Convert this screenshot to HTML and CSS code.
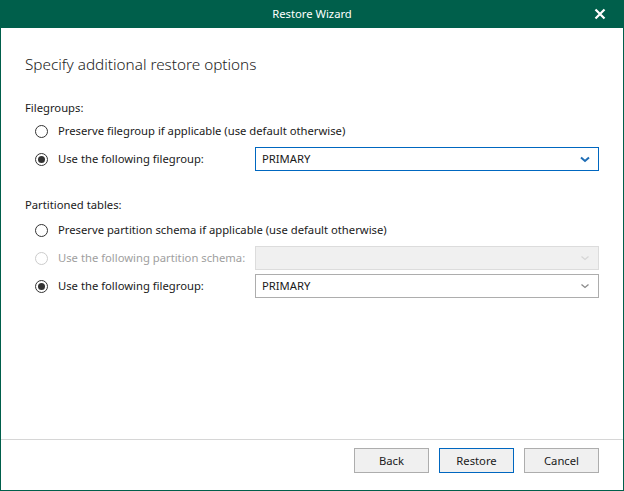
FILE: index.html
```html
<!DOCTYPE html>
<html>
<head>
<meta charset="utf-8">
<link rel="stylesheet" href="styles.css">
</head>
<body>
<div class="window">
  <div class="titlebar">
    <span class="title">Restore Wizard</span>
    <svg class="close" width="12" height="12" viewBox="0 0 12 12"><path d="M1.5 1.5 L10.5 10.5 M10.5 1.5 L1.5 10.5" stroke="#fff" stroke-width="2.2" fill="none"/></svg>
  </div>
  <div class="content">
    <h1 class="heading">Specify additional restore options</h1>

    <div class="group-label">Filegroups:</div>
    <div class="row first">
      <span class="radio"></span>
      <span class="label">Preserve filegroup if applicable (use default otherwise)</span>
    </div>
    <div class="row">
      <span class="radio checked"></span>
      <span class="label fixed">Use the following filegroup:</span>
      <div class="select focused">
        <span class="value">PRIMARY</span>
        <svg class="chev" width="10" height="7" viewBox="0 0 10 7"><path d="M1 1.5 L5 5 L9 1.5" stroke="#1e6db5" stroke-width="2" fill="none"/></svg>
      </div>
    </div>

    <div class="group-label second">Partitioned tables:</div>
    <div class="row first2">
      <span class="radio"></span>
      <span class="label">Preserve partition schema if applicable (use default otherwise)</span>
    </div>
    <div class="row">
      <span class="radio disabled"></span>
      <span class="label fixed disabled">Use the following partition schema:</span>
      <div class="select disabled">
        <span class="value"></span>
        <svg class="chev" width="10" height="7" viewBox="0 0 10 7"><path d="M1.5 1.5 L5 4.5 L8.5 1.5" stroke="#d6d6d6" stroke-width="1.3" fill="none"/></svg>
      </div>
    </div>
    <div class="row">
      <span class="radio checked"></span>
      <span class="label fixed">Use the following filegroup:</span>
      <div class="select">
        <span class="value">PRIMARY</span>
        <svg class="chev" width="10" height="7" viewBox="0 0 10 7"><path d="M1.5 1.5 L5 4.5 L8.5 1.5" stroke="#8a8a8a" stroke-width="1.3" fill="none"/></svg>
      </div>
    </div>
  </div>
  <div class="footer">
    <button class="btn">Back</button>
    <button class="btn default">Restore</button>
    <button class="btn">Cancel</button>
  </div>
</div>
</body>
</html>
```

FILE: styles.css
```css
html, body {
  margin: 0;
  padding: 0;
  background: #ffffff;
}
body {
  font-family: "Noto Sans", "Open Sans", sans-serif;
  font-size: 11.25px;
  color: #1a1a1a;
}
.window {
  width: 624px;
  height: 491px;
  box-sizing: border-box;
  border: 1px solid #005f4b;
  border-top: none;
  display: flex;
  flex-direction: column;
  background: #fff;
}
.titlebar {
  height: 28px;
  margin: 0 -1px;
  background: #005f4b;
  color: #fff;
  display: flex;
  align-items: center;
  justify-content: center;
  position: relative;
  flex: none;
}
.title {
  font-size: 11.25px;
  line-height: 16px;
}
.close {
  position: absolute;
  right: 18px;
  top: 8px;
}
.content {
  flex: 1;
  padding: 26px 24px 0 24px;
}
.heading {
  margin: 0;
  font-size: 15.3px;
  font-weight: 300;
  line-height: 20px;
  color: #222;
}
.group-label {
  margin-top: 26px;
  line-height: 16px;
  height: 16px;
}
.group-label.second {
  margin-top: 24px;
}
.row {
  display: flex;
  align-items: center;
  height: 28px;
  padding-left: 10px;
}
.row.first {
  margin-top: 1px;
}
.row.first2 {
  margin-top: 3px;
}
.radio {
  width: 13px;
  height: 13px;
  box-sizing: border-box;
  border: 1px solid #333;
  border-radius: 50%;
  margin-right: 10px;
  flex: none;
  display: flex;
  align-items: center;
  justify-content: center;
  background: #fff;
}
.radio.checked::after {
  content: "";
  width: 7px;
  height: 7px;
  border-radius: 50%;
  background: #333;
}
.radio.disabled {
  border-color: #cccccc;
}
.label {
  line-height: 16px;
  white-space: nowrap;
}
.label.fixed {
  width: 197px;
  flex: none;
}
.label.disabled {
  color: #a0a0a0;
}
.select {
  width: 345px;
  height: 24px;
  box-sizing: border-box;
  border: 1px solid #adadad;
  display: flex;
  align-items: center;
  justify-content: space-between;
  padding: 0 8px 0 6px;
  background: #fff;
}
.select.focused {
  border-color: #0067c0;
}
.select.disabled {
  background: #f0f0f0;
  border-color: #dcdcdc;
}
.value {
  line-height: 16px;
}
.footer {
  flex: none;
  height: 42px;
  border-top: 1px solid #d6d6d6;
  display: flex;
  justify-content: flex-end;
  align-items: flex-start;
  gap: 10px;
  padding: 8px 24px 0 0;
}
.btn {
  width: 75px;
  height: 25px;
  box-sizing: border-box;
  border: 1px solid #adadad;
  background: #f0f0f0;
  font-family: "Noto Sans", "Open Sans", sans-serif;
  font-size: 11.25px;
  color: #1a1a1a;
  padding: 0;
}
.btn.default {
  border-color: #0067c0;
}
```
